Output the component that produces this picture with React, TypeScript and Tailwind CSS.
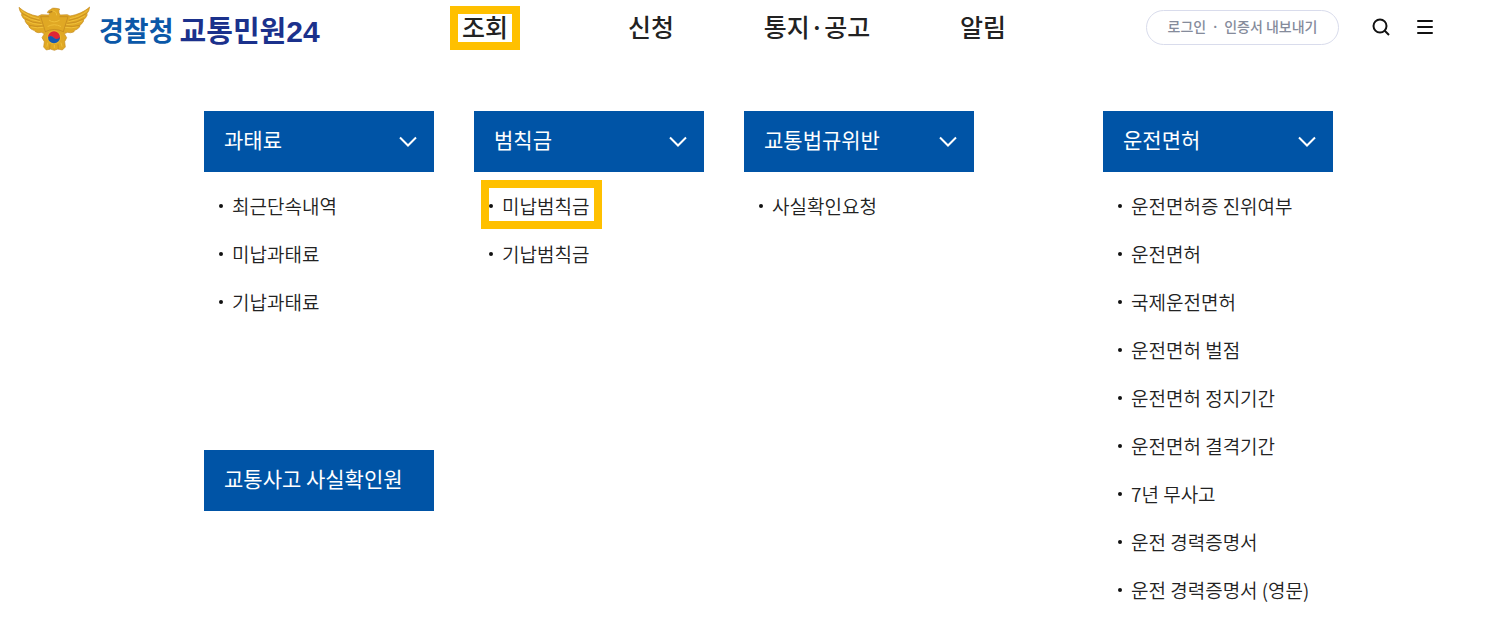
type MenuGroup = { title: string; items: string[]; marked?: string };

const navItems = ["조회", "신청", "통지·공고", "알림"];

const groups: MenuGroup[] = [
  { title: "과태료", items: ["최근단속내역", "미납과태료", "기납과태료"] },
  { title: "범칙금", items: ["미납범칙금", "기납범칙금"], marked: "미납범칙금" },
  { title: "교통법규위반", items: ["사실확인요청"] },
];

const license: MenuGroup = {
  title: "운전면허",
  items: [
    "운전면허증 진위여부",
    "운전면허",
    "국제운전면허",
    "운전면허 벌점",
    "운전면허 정지기간",
    "운전면허 결격기간",
    "7년 무사고",
    "운전 경력증명서",
    "운전 경력증명서 (영문)",
  ],
};

function Emblem() {
  return (
    <svg viewBox="54 15 216 135" className="h-[45px] w-[72px] shrink-0" aria-hidden="true">
      <path
        d="M57 19 C72 33 92 42 114 46 L124 41 L146 42 L150 37 L142 35 Q143 29 151 26 Q157 19 168 22 L179 24 Q175 29 177 35 L180 42 L202 41 L210 45 C232 41 252 33 269 18 Q268 30 260 39 L262 41 Q258 51 250 57 L251 60 Q245 70 239 74 L239 78 Q231 86 224 88 L221 93 Q211 97 203 94 L193 98 L200 110 L194 122 L196 138 L187 147 L174 144 L163 148 L151 144 L139 147 L131 138 L133 122 L126 110 L133 98 L124 94 Q114 97 106 92 L102 88 Q93 86 87 78 L87 74 Q79 69 75 60 L76 57 Q67 51 64 41 L66 39 Q58 30 57 19 Z"
        fill="#e0a824"
        stroke="#c58c22"
        strokeWidth="2"
        strokeLinejoin="round"
      />
      <g fill="none" stroke="#f0c03a" strokeWidth="3" strokeLinecap="round">
        <path d="M64 29 Q86 47 116 53" />
        <path d="M72 45 Q92 58 120 62" />
        <path d="M80 60 Q100 71 126 71" />
        <path d="M95 78 Q112 83 130 79" />
        <path d="M262 29 Q240 47 210 53" />
        <path d="M254 45 Q234 58 206 62" />
        <path d="M246 60 Q226 71 200 71" />
        <path d="M231 78 Q214 83 196 79" />
        <path d="M158 30 Q170 30 170 42" />
        <path d="M148 58 Q162 68 178 58" />
        <path d="M144 76 Q162 66 182 76" />
        <path d="M141 136 L143 126 M163 140 V133 M186 136 L183 126" />
      </g>
      <g fill="none" stroke="#bf851f" strokeWidth="2" strokeLinecap="round">
        <path d="M67 38 Q90 53 118 58" />
        <path d="M76 54 Q96 66 123 67" />
        <path d="M87 73 Q108 79 129 75" />
        <path d="M259 38 Q236 53 208 58" />
        <path d="M250 54 Q230 66 203 67" />
        <path d="M239 73 Q218 79 197 75" />
        <path d="M122 47 L136 92 M204 47 L190 92 M124 47 H146 M180 47 H202" />
        <path d="M136 92 Q163 78 190 92" />
        <path d="M150 131 L149 144 M174 131 L175 144" />
      </g>
      <path d="M147 34 L157 32" stroke="#9a6a1a" strokeWidth="3" />
      <circle cx="162" cy="109" r="21" fill="#e8b52f" />
      <path d="M144 109 A18 18 0 0 1 180 109 L180 112 Q171 119 162 111 Q153 101 144 109 Z" fill="#df2636" />
      <path d="M180 109 A18 18 0 0 1 144 109 Q153 101 162 110 Q171 118 180 109 Z" fill="#1458b3" />
    </svg>
  );
}

function Chevron() {
  return (
    <svg viewBox="0 0 18 12" className="h-3 w-[18px]" fill="none" stroke="white" strokeWidth="2" aria-hidden="true">
      <path d="M1 1.500 L9 9.500 L17 1.500" />
    </svg>
  );
}

function MenuSection({ group }: { group: MenuGroup }) {
  return (
    <section>
      <button
        type="button"
        className="flex h-[61px] w-full items-center justify-between bg-[#0054a6] pr-[17px] pl-5 text-[21px] text-white"
      >
        <span className="pb-1">{group.title}</span>
        <Chevron />
      </button>
      <ul className="pt-[10px]">
        {group.items.map((item) => (
          <li key={item} className="relative flex h-12 w-fit items-center gap-[9px] pl-[15px] whitespace-nowrap">
            <span className="size-1 rounded-full bg-[#111]" />
            <a href="#" className="text-[19px] font-[350] text-[#222]">
              {item}
            </a>
            {item === group.marked && (
              <span className="pointer-events-none absolute -top-0.5 -right-[13px] bottom-px left-[7px] border-8 border-[#ffc000]" />
            )}
          </li>
        ))}
      </ul>
    </section>
  );
}

export default function App() {
  return (
    <div className="min-h-screen bg-white font-['Noto_Sans_CJK_KR','Noto_Sans_KR',sans-serif] text-[#222]">
      <header className="flex h-14 items-center pr-[74px] pl-[18px]">
        <a href="#" className="flex w-96 shrink-0 items-center gap-[9px] font-bold whitespace-nowrap">
          <Emblem />
          <span className="flex items-center gap-[6px] pt-1">
            <span className="text-[27px] leading-8 text-[#0b58a8]">경찰청</span>
            <span className="flex items-baseline text-[29px] leading-8 text-[#1b318c]">
              교통민원
              <span className="font-['Liberation_Sans',sans-serif] text-[30px] leading-8">24</span>
            </span>
          </span>
        </a>
        <nav className="grid w-[664px] shrink-0 grid-cols-4 text-[25px] font-medium">
          {navItems.map((item, index) => (
            <a
              key={item}
              href="#"
              className={
                index === 0
                  ? "flex h-11 items-center justify-self-center border-8 border-[#ffc000] px-1 pb-0.5"
                  : "flex h-11 items-center justify-self-center pb-0.5 whitespace-nowrap"
              }
            >
              {item}
            </a>
          ))}
        </nav>
        <div className="ml-auto flex items-center gap-7 pb-0.5">
          <button
            type="button"
            className="flex h-[35px] w-[193px] items-center justify-center gap-[5px] rounded-full border border-[#d9dcec] pb-0.5 text-[14px] font-medium whitespace-nowrap text-[#858b9b]"
          >
            <span>로그인</span>
            <span>·</span>
            <span>인증서 내보내기</span>
          </button>
          <div className="flex gap-[22px]">
            <button type="button" aria-label="검색" className="flex size-7 items-center justify-center">
              <svg viewBox="0 0 18 18" className="size-[18px]" fill="none" stroke="#111" strokeWidth="2" aria-hidden="true">
                <circle cx="8" cy="8" r="6.500" />
                <path d="M12.500 12.500 L17 17" />
              </svg>
            </button>
            <button type="button" aria-label="전체메뉴" className="flex h-7 w-4 items-center justify-center">
              <svg viewBox="0 0 16 16" className="size-4" stroke="#111" strokeWidth="2" aria-hidden="true">
                <path d="M1 2 H15 M1 8 H15 M1 14 H15" strokeLinecap="round" />
              </svg>
            </button>
          </div>
        </div>
      </header>
      <main className="flex items-start justify-between gap-10 pt-[55px] pr-[174px] pl-[204px]">
        <div className="grid grid-cols-[repeat(3,230px)] gap-x-10">
          {groups.map((group) => (
            <div key={group.title} className="min-h-[339px]">
              <MenuSection group={group} />
            </div>
          ))}
          <a href="#" className="flex h-[61px] items-center bg-[#0054a6] pb-1 pl-5 text-[21px] text-white">
            교통사고 사실확인원
          </a>
        </div>
        <div className="w-[230px] shrink-0">
          <MenuSection group={license} />
        </div>
      </main>
    </div>
  );
}
